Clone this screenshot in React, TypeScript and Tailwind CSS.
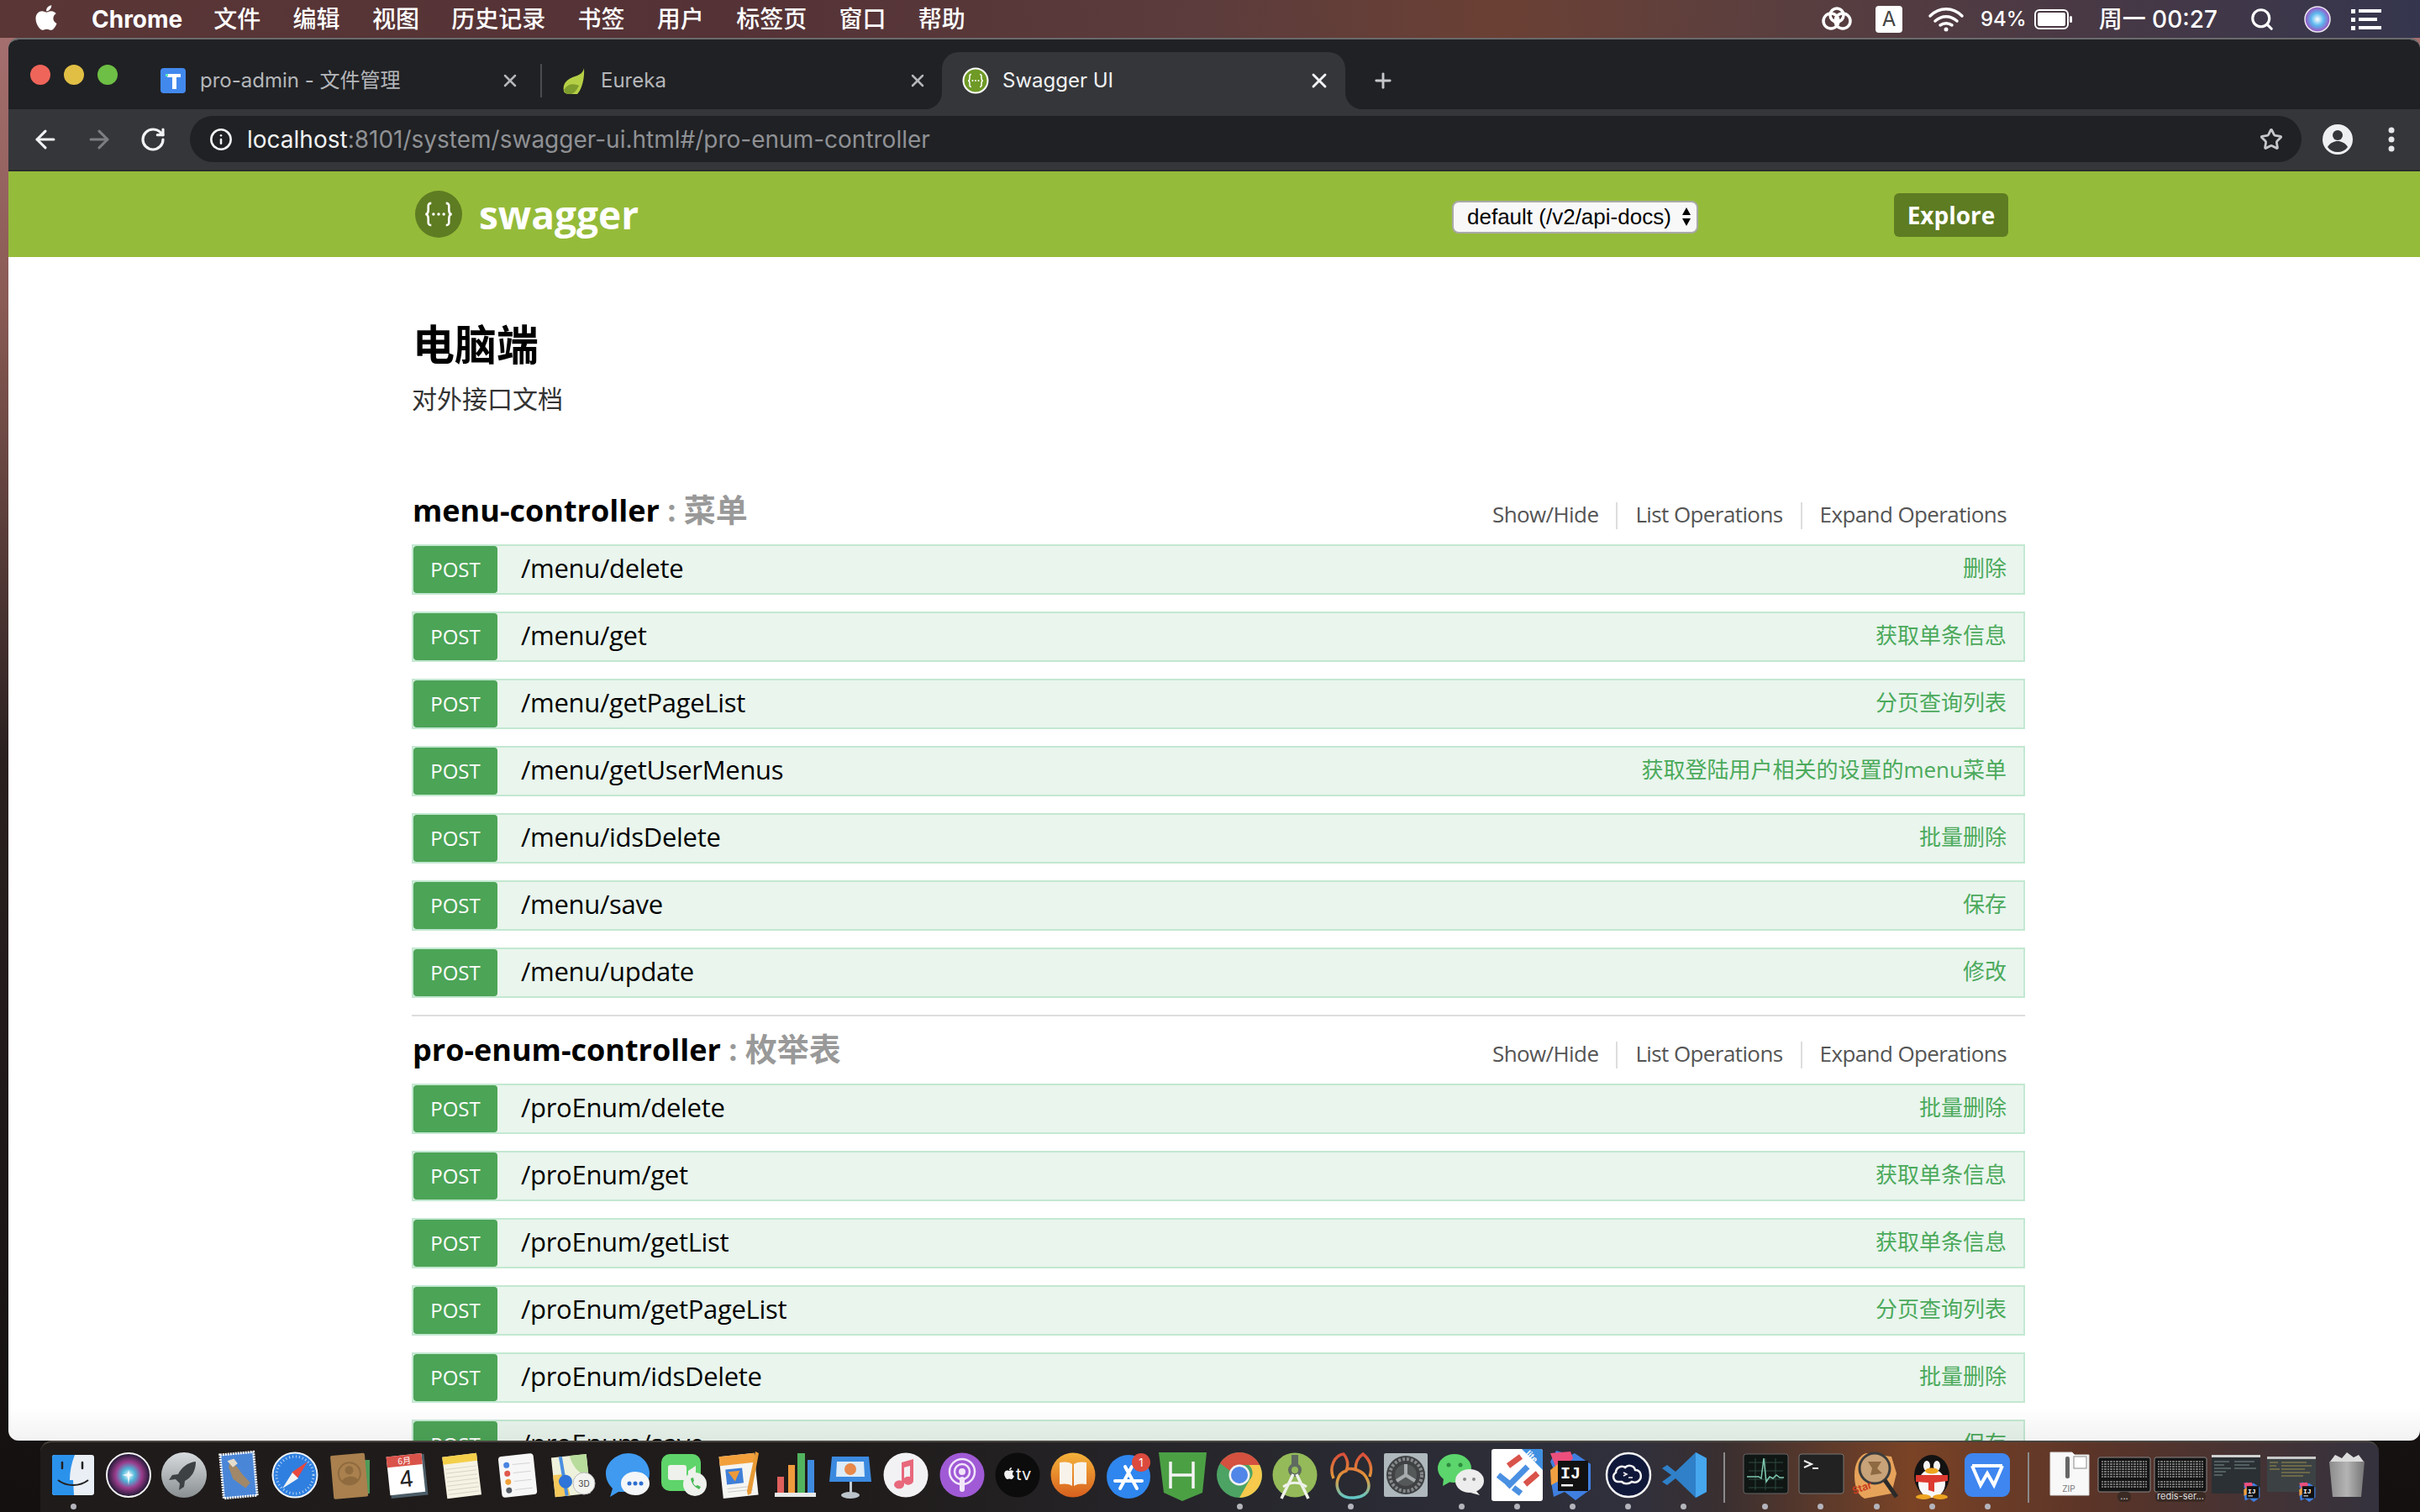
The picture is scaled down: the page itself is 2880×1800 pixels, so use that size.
import type { ReactNode } from "react";
import { ArrowLeft, ArrowRight, Info, Plus, RotateCw, Search, Star, X } from "lucide-react";
import { FaApple } from "react-icons/fa";

const menuItems = ["文件", "编辑", "视图", "历史记录", "书签", "用户", "标签页", "窗口", "帮助"];

const sections = [
  {
    name: "menu-controller",
    desc: "菜单",
    rows: [
      ["/menu/delete", "删除"],
      ["/menu/get", "获取单条信息"],
      ["/menu/getPageList", "分页查询列表"],
      ["/menu/getUserMenus", "获取登陆用户相关的设置的menu菜单"],
      ["/menu/idsDelete", "批量删除"],
      ["/menu/save", "保存"],
      ["/menu/update", "修改"],
    ],
  },
  {
    name: "pro-enum-controller",
    desc: "枚举表",
    rows: [
      ["/proEnum/delete", "批量删除"],
      ["/proEnum/get", "获取单条信息"],
      ["/proEnum/getList", "获取单条信息"],
      ["/proEnum/getPageList", "分页查询列表"],
      ["/proEnum/idsDelete", "批量删除"],
      ["/proEnum/save", "保存"],
    ],
  },
];

function SwaggerMark({ size, ring }: { size: number; ring?: boolean }) {
  return (
    <svg width={size} height={size} viewBox="0 0 32 32">
      <circle cx="16" cy="16" r={ring ? 14.5 : 16} fill={ring ? "#6f9a26" : "#5e7c22"} stroke={ring ? "#fff" : "none"} strokeWidth="2" />
      <path d="M11 8.5c-2.5 0-2 2-2 4s-.5 3.5-2 3.5c1.5 0 2 1.500 2 3.5s-.5 4 2 4M21 8.5c2.5 0 2 2 2 4s.5 3.5 2 3.5c-1.500 0-2 1.500-2 3.5s.5 4-2 4" fill="none" stroke="#fff" strokeWidth="1.5" />
      <circle cx="12.5" cy="16" r="1" fill="#fff" />
      <circle cx="16" cy="16" r="1" fill="#fff" />
      <circle cx="19.5" cy="16" r="1" fill="#fff" />
    </svg>
  );
}

function StatusBar() {
  return (
    <div className="flex h-[45px] shrink-0 items-center bg-[linear-gradient(90deg,#5a3636_0%,#543236_30%,#5c3c3c_50%,#6b4034_62%,#5c3f3e_72%,#4a3944_85%,#35364e_100%)] text-[28px] leading-none text-white [font-family:Inter,'Noto_Sans_CJK_SC',sans-serif]">
      <FaApple className="ml-[40px] mb-[4px] h-[34px] w-[30px]" />
      <span className="ml-[39px] font-bold">Chrome</span>
      <div className="ml-[37px] flex gap-[38.3px] font-medium">
        {menuItems.map((m) => (
          <span key={m}>{m}</span>
        ))}
      </div>
      <div className="ml-auto flex items-center">
        <svg width="40" height="32" viewBox="0 0 40 32" fill="none" stroke="#fff" strokeWidth="3.5">
          <circle cx="13" cy="18" r="9" />
          <circle cx="27" cy="18" r="9" />
          <circle cx="20" cy="11" r="8" />
        </svg>
        <span className="ml-[26px] flex h-[32px] w-[32px] items-center justify-center rounded-[4px] bg-white text-[24px] text-[#444]">A</span>
        <svg className="ml-[30px]" width="44" height="32" viewBox="0 0 44 32" fill="none" stroke="#fff" strokeWidth="3.5" strokeLinecap="round">
          <path d="M3 12c11-11 27-11 38 0M9 18c8-7 18-7 26 0M15 23c4-3 10-3 14 0" />
          <circle cx="22" cy="28" r="2.5" fill="#fff" stroke="none" />
        </svg>
        <span className="ml-[19px] text-[24px] font-medium">94%</span>
        <svg className="ml-[9px]" width="46" height="24" viewBox="0 0 46 24">
          <rect x="1" y="1" width="39" height="22" rx="5" fill="none" stroke="#fff" strokeWidth="2" />
          <rect x="4" y="4" width="33" height="16" rx="2" fill="#fff" />
          <rect x="42" y="8" width="3" height="8" rx="1.5" fill="#fff" />
        </svg>
        <span className="ml-[31px] font-medium">周一 00:27</span>
        <Search className="ml-[38px] h-[30px] w-[30px]" strokeWidth={2.5} />
        <svg className="ml-[35px]" width="32" height="32" viewBox="0 0 32 32">
          <defs>
            <radialGradient id="menuSiri">
              <stop offset="0" stopColor="#fff" />
              <stop offset="0.5" stopColor="#5bb7ee" />
              <stop offset="1" stopColor="#a04ec0" />
            </radialGradient>
          </defs>
          <circle cx="16" cy="16" r="15" fill="url(#menuSiri)" stroke="#e8e8f0" strokeWidth="1.5" />
        </svg>
        <svg className="ml-[24px] mr-[46px]" width="36" height="26" viewBox="0 0 36 26" fill="#fff">
          <rect x="0" y="1" width="5" height="5" />
          <rect x="9" y="1" width="27" height="4" />
          <rect x="0" y="11" width="5" height="5" />
          <rect x="9" y="11" width="22" height="4" />
          <rect x="0" y="21" width="5" height="5" />
          <rect x="9" y="21" width="27" height="4" />
        </svg>
      </div>
    </div>
  );
}

function TabStrip() {
  return (
    <div className="flex h-[83px] shrink-0 items-end bg-[#202124] text-[24px] leading-none [font-family:Inter,'Noto_Sans_CJK_SC',sans-serif]">
      <div className="mb-[29px] ml-[26px] flex gap-[16px]">
        <span className="h-[24px] w-[24px] rounded-full bg-[#f0655a]" />
        <span className="h-[24px] w-[24px] rounded-full bg-[#e1bf45]" />
        <span className="h-[24px] w-[24px] rounded-full bg-[#6dbf45]" />
      </div>
      <div className="mb-[19px] ml-[51px] flex h-[30px] w-[454px] items-center text-[#b4b6ba]">
        <svg width="30" height="30" viewBox="0 0 30 30">
          <rect width="30" height="30" rx="4" fill="#4289ee" />
          <rect x="8" y="7" width="16" height="4" fill="#fff" />
          <rect x="14" y="7" width="5" height="18" fill="#fff" />
          <rect x="6" y="7" width="3" height="3" fill="#5eeac0" />
        </svg>
        <span className="ml-[17px]">pro-admin - 文件管理</span>
        <X className="ml-[auto] mr-[24px] h-[24px] w-[24px]" strokeWidth={2.5} />
        <span className="h-[40px] w-[2px] bg-[#4a4c50]" />
      </div>
      <div className="mb-[19px] flex h-[30px] w-[476px] items-center pl-[22px] text-[#b4b6ba]">
        <svg width="32" height="32" viewBox="0 0 32 32">
          <path d="M28 1c-1 5-4 8-11 10C8 14 2 19 4 29c1 2 3 3 7 3h9c5-5 9-18 8-31z" fill="#b6d046" />
          <path d="M4 27c5-8 12-8 18-5-3 6-6 9-9 10h-3c-3 0-5-2-6-5z" fill="#7e9d2c" />
        </svg>
        <span className="ml-[16px]">Eureka</span>
        <X className="ml-[auto] mr-[17px] h-[24px] w-[24px]" strokeWidth={2.5} />
      </div>
      <div className="relative flex h-[68px] w-[480px] items-center rounded-t-[20px] bg-[#35363a] pl-[24px] text-[#f1f3f4]">
        <div className="absolute bottom-0 left-[-20px] h-[20px] w-[20px] bg-[#35363a]">
          <div className="h-full w-full rounded-br-[20px] bg-[#202124]" />
        </div>
        <div className="absolute bottom-0 right-[-20px] h-[20px] w-[20px] bg-[#35363a]">
          <div className="h-full w-full rounded-bl-[20px] bg-[#202124]" />
        </div>
        <SwaggerMark size={32} ring />
        <span className="ml-[16px]">Swagger UI</span>
        <X className="ml-auto mr-[17px] h-[28px] w-[28px]" strokeWidth={2.5} />
      </div>
      <Plus className="mb-[20px] ml-[31px] h-[28px] w-[28px] text-[#c4c7cb]" strokeWidth={2.5} />
    </div>
  );
}

function Toolbar() {
  return (
    <div className="flex h-[74px] shrink-0 items-start border-b-2 border-[#2b2c2f] bg-[#35363a] pt-[8px] text-[28px] leading-none [font-family:Inter,sans-serif]">
      <div className="ml-[12px] flex h-[55px] items-center">
        <div className="flex w-[64px] justify-center text-[#f1f3f4]">
          <ArrowLeft className="h-[34px] w-[34px]" strokeWidth={2.2} />
        </div>
        <div className="flex w-[64px] justify-center text-[#7c7e81]">
          <ArrowRight className="h-[34px] w-[34px]" strokeWidth={2.2} />
        </div>
        <div className="flex w-[64px] justify-center text-[#f1f3f4]">
          <RotateCw className="h-[32px] w-[32px]" strokeWidth={2.4} />
        </div>
      </div>
      <div className="ml-[12px] flex h-[55px] flex-1 items-center rounded-full bg-[#202124] pl-[23px] pr-[22px]">
        <Info className="h-[28px] w-[28px] text-[#f1f3f4]" strokeWidth={2.2} />
        <span className="ml-[17px] text-[#f1f3f4]">
          localhost<span className="text-[#8f9195]">:8101/system/swagger-ui.html#/pro-enum-controller</span>
        </span>
        <Star className="ml-auto h-[28px] w-[28px] text-[#c4c7cb]" strokeWidth={2.4} />
      </div>
      <div className="flex h-[55px] items-center pr-[30px]">
        <svg className="ml-[25px]" width="36" height="36" viewBox="0 0 36 36">
          <circle cx="18" cy="18" r="18" fill="#eef0f2" />
          <circle cx="18" cy="13" r="6" fill="#35363a" />
          <path d="M6 27c3-5 8-7 12-7s9 2 12 7c-3 4-7 6-12 6s-9-2-12-6z" fill="#35363a" />
        </svg>
        <svg className="ml-[42px]" width="8" height="30" viewBox="0 0 8 30" fill="#e4e6e8">
          <circle cx="4" cy="4" r="3.5" />
          <circle cx="4" cy="15" r="3.5" />
          <circle cx="4" cy="26" r="3.5" />
        </svg>
      </div>
    </div>
  );
}

function SwaggerHeader() {
  return (
    <div className="flex h-[102px] shrink-0 justify-center bg-[#95bb3a] pl-[10px] [font-family:'Open_Sans',sans-serif]">
      <div className="flex w-[1920px] items-center pl-[4px] pr-[20px]">
        <SwaggerMark size={56} />
        <span className="ml-[20px] text-[46px] font-bold leading-none text-white">swagger</span>
        <div className="ml-auto mr-[233px] mt-[6px] flex h-[39px] w-[293px] items-center rounded-[8px] border-2 border-[#a9a9a9] bg-[#f8f8f8] pl-[16px] text-[26px] leading-none text-black [font-family:'Liberation_Sans',sans-serif]">
          default (/v2/api-docs)
          <svg className="ml-auto mr-[6px]" width="12" height="24" viewBox="0 0 12 24">
            <path d="M6 1l5 9H1zM6 23l-5-9h10z" />
          </svg>
        </div>
        <button className="mt-[2px] h-[52px] w-[136px] rounded-[6px] bg-[#5e7c22] text-[28px] font-bold text-white">Explore</button>
      </div>
    </div>
  );
}

function Section({ section, first }: { section: (typeof sections)[number]; first: boolean }) {
  return (
    <section className={first ? "" : "border-t-2 border-[#dddddd]"}>
      <div className="flex h-[80px] items-start">
        <h2 className="mt-[18px] pl-[1px] text-[36px] font-bold leading-[40px] text-black">
          {section.name}
          <span className="text-[#999999]"> : <span className="text-[38px]">{section.desc}</span></span>
        </h2>
        <div className="ml-auto mr-[22px] mt-[30px] flex h-[32px] items-center text-[26px] leading-[28px] tracking-[-0.6px] text-[#555555]">
          <span className="h-full border-r-2 border-[#dddddd] pr-[21px]">Show/Hide</span>
          <span className="h-full border-r-2 border-[#dddddd] px-[21px]">List Operations</span>
          <span className="h-full pl-[21px]">Expand Operations</span>
        </div>
      </div>
      {section.rows.map(([path, desc]) => (
        <div key={path} className="mb-[20px] flex h-[60px] items-center border-2 border-[#c3e8d1] bg-[#e9f5ed] pr-[20px]">
          <span className="flex h-[56px] w-[100px] items-center justify-center rounded-[4px] bg-[#4ca457] text-[24px] leading-none text-white">POST</span>
          <span className="ml-[28px] mb-[4px] text-[31px] leading-none tracking-[-0.3px] text-black">{path}</span>
          <span className="ml-auto mb-[4px] text-[26px] leading-none text-[#4caa5c]">{desc}</span>
        </div>
      ))}
    </section>
  );
}

function Box({ children }: { children: ReactNode }) {
  return (
    <svg width="60" height="60" viewBox="0 0 60 60" className="overflow-visible">
      {children}
    </svg>
  );
}

function MiniIJ({ x = 0, y = 0, s = 1 }: { x?: number; y?: number; s?: number }) {
  return (
    <g transform={`translate(${x} ${y}) scale(${s})`}>
      <path d="M3 14L10 1l18 5 4-2 19 13v30L33 60 20 50 7 56l-3-18 5-10z" fill="#3f7fe0" />
      <path d="M3 4l24-2 3 8-17 20z" fill="#ec4f7c" />
      <path d="M3 24l10-8 2 20-11 6z" fill="#f0a040" />
      <rect x="12" y="13" width="36" height="36" fill="#111" />
      <text x="15" y="34" fontSize="20" fontWeight="700" fill="#fff" fontFamily="Liberation Mono, monospace">IJ</text>
      <rect x="16" y="41" width="14" height="2.5" fill="#fff" />
    </g>
  );
}

const Thumb = ({ label }: { label: string }) => (
  <Box>
    <rect x="-1" y="9" width="62" height="41" rx="2" fill="#141414" stroke="#8a8a8a" strokeWidth="1" />
    <path d="M3 14h54M3 17h54M3 20h54M3 23h54M3 26h54M3 29h54M3 32h54M3 38h54M3 41h54M3 44h54" stroke="#909090" strokeWidth="1.4" strokeDasharray="2 1 3 1" />
    <rect x={label === "..." ? 22 : 0} y="50" width={label === "..." ? 16 : 60} height="12" rx="5" fill="#3a2a24" />
    <text x="30" y="59" textAnchor="middle" fontSize="11" fill="#ddd" fontFamily="Inter, sans-serif">{label}</text>
  </Box>
);

type DockApp = { id: string; dot?: boolean; icon: ReactNode } | { id: string; separator: true };

const dockApps: DockApp[] = [
  {
    id: "finder",
    dot: true,
    icon: (
      <Box>
        <rect x="5" y="6" width="50" height="48" rx="3" fill="#e9eff5" />
        <path d="M8 6h24c-4 10-6 20-6 30h4l1 18H8a3 3 0 0 1-3-3V9a3 3 0 0 1 3-3z" fill="#2b92ec" />
        <path d="M17 15v7M41 15v7" stroke="#222" strokeWidth="2.5" strokeLinecap="round" />
        <path d="M12 36c10 8 26 8 36 0" fill="none" stroke="#222" strokeWidth="2" />
      </Box>
    ),
  },
  {
    id: "siri",
    icon: (
      <Box>
        <defs>
          <radialGradient id="siriG">
            <stop offset="0" stopColor="#e8fbff" />
            <stop offset="0.3" stopColor="#4fb4d8" />
            <stop offset="0.6" stopColor="#9a3c8c" />
            <stop offset="1" stopColor="#191730" />
          </radialGradient>
        </defs>
        <circle cx="30" cy="30" r="26" fill="url(#siriG)" stroke="#f3f3f3" strokeWidth="2" />
        <path d="M30 24l1.500 4.500L36 30l-4.500 1.500L30 42l-1.500-10.500L22 30l6.500-1.500z" fill="#fff" opacity="0.8" />
      </Box>
    ),
  },
  {
    id: "launchpad",
    icon: (
      <Box>
        <defs>
          <linearGradient id="rocketG" x2="0" y2="1">
            <stop offset="0" stopColor="#d7dbde" />
            <stop offset="1" stopColor="#8a8f92" />
          </linearGradient>
        </defs>
        <circle cx="30" cy="30" r="27" fill="url(#rocketG)" />
        <path d="M44 14c-10 1-17 7-21 15l-7 1-4 6 8-1 5 5-1 8 6-4 1-7c8-4 13-12 13-23z" fill="#3d4144" />
      </Box>
    ),
  },
  {
    id: "mail",
    icon: (
      <Box>
        <g transform="rotate(-5 30 30)">
          <rect x="9" y="4" width="40" height="52" fill="#4a86d8" stroke="#fff" strokeWidth="3" strokeDasharray="2 1" />
          <path d="M20 12l8 8 6 10 8 10-6 6-14-12-4-14z" fill="#a08868" />
          <path d="M17 12l8-2 4 6-6 4z" fill="#e6dccb" />
        </g>
      </Box>
    ),
  },
  {
    id: "safari",
    icon: (
      <Box>
        <circle cx="30" cy="30" r="26.5" fill="#2f7fe0" stroke="#f0f4f8" strokeWidth="2" />
        <circle cx="30" cy="30" r="22" fill="none" stroke="#bcd9f5" strokeWidth="3" strokeDasharray="1 3" />
        <path d="M45 14L26 27l7 7z" fill="#e8483e" />
        <path d="M15 46l19-12-7-7z" fill="#f3f3f3" />
      </Box>
    ),
  },
  {
    id: "contacts",
    icon: (
      <Box>
        <rect x="46" y="12" width="6" height="40" fill="#4f9a58" />
        <g transform="rotate(-5 30 30)">
          <rect x="7" y="5" width="41" height="52" rx="2" fill="#a9804e" />
          <circle cx="28" cy="28" r="13" fill="none" stroke="#8f6b3f" strokeWidth="2" />
          <circle cx="28" cy="24" r="5" fill="#8f6b3f" />
          <path d="M18 37c3-7 17-7 20 0-5 4-15 4-20 0z" fill="#8f6b3f" />
        </g>
      </Box>
    ),
  },
  {
    id: "calendar",
    icon: (
      <Box>
        <g transform="rotate(-6 30 30)">
          <rect x="9" y="7" width="44" height="49" fill="#4c5d68" />
          <rect x="8" y="6" width="42" height="46" fill="#fff" />
          <rect x="8" y="6" width="42" height="13" fill="#d9534a" />
          <text x="29" y="16.5" textAnchor="middle" fontSize="10" fill="#fff" fontFamily="'Noto Sans CJK SC', sans-serif">6月</text>
          <text x="29" y="44" textAnchor="middle" fontSize="27" fill="#222" fontFamily="Inter, sans-serif">4</text>
        </g>
      </Box>
    ),
  },
  {
    id: "notes",
    icon: (
      <Box>
        <g transform="rotate(-7 30 30)">
          <rect x="9" y="6" width="41" height="50" fill="#f6f2e4" />
          <rect x="9" y="6" width="41" height="9" fill="#f4cf4a" />
          <path d="M11 21h37M11 26h37M11 31h37M11 36h37M11 41h37M11 46h37M11 51h37" stroke="#d8d4c6" />
        </g>
      </Box>
    ),
  },
  {
    id: "reminders",
    icon: (
      <Box>
        <g transform="rotate(-6 30 30)">
          <rect x="9" y="6" width="42" height="49" rx="4" fill="#f7f7f7" />
          <circle cx="18" cy="17" r="3.5" fill="#4a84e0" />
          <circle cx="18" cy="27" r="3.5" fill="#e0594e" />
          <circle cx="18" cy="37" r="3.5" fill="#f0a03a" />
          <circle cx="18" cy="47" r="3.5" fill="#555c66" />
          <path d="M25 17h21M25 27h21M25 37h21M25 47h21" stroke="#d4d4d4" />
        </g>
      </Box>
    ),
  },
  {
    id: "maps",
    icon: (
      <Box>
        <g transform="rotate(-6 28 28)">
          <rect x="6" y="7" width="42" height="47" fill="#eef2dc" />
          <path d="M28 7h20v26c-10-2-18-12-20-26z" fill="#b8dc9c" />
          <path d="M6 28h14l4 26H6z" fill="#f5c95c" />
          <path d="M17 7l3 47" stroke="#4a8fe0" strokeWidth="4" />
          <circle cx="20" cy="37" r="8" fill="#2f74d8" />
        </g>
        <circle cx="43" cy="40" r="13" fill="#f3f3f0" stroke="#bbb" />
        <text x="43" y="44" textAnchor="middle" fontSize="10" fill="#444" fontFamily="Inter, sans-serif">3D</text>
      </Box>
    ),
  },
  {
    id: "messages",
    icon: (
      <Box>
        <path d="M30 4c14 0 25 11 25 24 0 10-6 18-14 22H18L8 56l3-10C6 41 3 35 3 28 3 15 16 4 30 4z" fill="#3f9af0" />
        <ellipse cx="38" cy="40" rx="17" ry="14" fill="#f4f6f8" />
        <circle cx="31" cy="40" r="2.5" fill="#2f6ed0" />
        <circle cx="38" cy="40" r="2.5" fill="#2f6ed0" />
        <circle cx="45" cy="40" r="2.5" fill="#2f6ed0" />
      </Box>
    ),
  },
  {
    id: "facetime",
    icon: (
      <Box>
        <rect x="3" y="5" width="47" height="44" rx="10" fill="#5fd46a" />
        <rect x="11" y="18" width="22" height="18" rx="3" fill="#eef1ec" />
        <path d="M35 25l9-6v16l-9-6z" fill="#eef1ec" />
        <circle cx="43" cy="41" r="14" fill="#eef1ec" />
        <path d="M38 34c1 6 4 10 10 13l2-3-4-2-2 1c-2-1-3-3-3-5l1-1-1-4z" fill="#49b956" />
      </Box>
    ),
  },
  {
    id: "pages",
    icon: (
      <Box>
        <g transform="rotate(-6 28 30)">
          <rect x="8" y="6" width="42" height="50" fill="#f5f5f2" />
          <rect x="8" y="6" width="42" height="11" fill="#f2a03c" />
          <rect x="14" y="22" width="20" height="18" fill="#3f7fd8" />
          <path d="M17 25h14l-7 12z" fill="#ee9a3a" />
          <path d="M14 45h30M14 49h30" stroke="#ccc" />
        </g>
        <path d="M49 2l4 2-9 48-4 2-1-5z" fill="#e89a35" />
      </Box>
    ),
  },
  {
    id: "numbers",
    icon: (
      <Box>
        <rect x="9" y="32" width="8" height="19" fill="#e0605c" />
        <rect x="22" y="18" width="8" height="33" fill="#ef9a3c" />
        <rect x="33" y="4" width="9" height="47" fill="#52b35e" />
        <rect x="45" y="12" width="8" height="39" fill="#3f8be0" />
        <rect x="6" y="51" width="49" height="5" fill="#e8e8e8" />
      </Box>
    ),
  },
  {
    id: "keynote",
    icon: (
      <Box>
        <rect x="29" y="34" width="3" height="19" fill="#c5cdd4" />
        <ellipse cx="30" cy="54" rx="11" ry="4" fill="#bcc5cb" />
        <path d="M8 8h44l3 30H5z" fill="#3b8ae0" />
        <path d="M14 14h32l1 18H13z" fill="#dcecf8" />
        <circle cx="30" cy="23" r="7" fill="#e8884a" />
      </Box>
    ),
  },
  {
    id: "music",
    icon: (
      <Box>
        <circle cx="30" cy="30" r="26.5" fill="#f2f2f4" />
        <path d="M25 15l14-4v26a6 5 0 1 1-4-5V19l-7 2v21a6 5 0 1 1-3-5z" fill="#e8687c" />
      </Box>
    ),
  },
  {
    id: "podcasts",
    icon: (
      <Box>
        <circle cx="30" cy="30" r="26.5" fill="#a05ad6" />
        <circle cx="30" cy="26" r="15" fill="none" stroke="#f2e6fa" strokeWidth="2.5" />
        <circle cx="30" cy="26" r="9" fill="none" stroke="#f2e6fa" strokeWidth="2.5" />
        <circle cx="30" cy="26" r="4" fill="#f2e6fa" />
        <rect x="27" y="32" width="6" height="18" rx="3" fill="#f2e6fa" />
      </Box>
    ),
  },
  {
    id: "tv",
    icon: (
      <Box>
        <circle cx="30" cy="30" r="26.5" fill="#0c0c0c" />
        <FaApple x="12" y="20" size={16} color="#f2f2f2" />
        <text x="28" y="36" fontSize="20" fill="#f2f2f2" fontFamily="Inter, sans-serif">tv</text>
      </Box>
    ),
  },
  {
    id: "books",
    icon: (
      <Box>
        <defs>
          <linearGradient id="booksG" x2="0" y2="1">
            <stop offset="0" stopColor="#f5b33a" />
            <stop offset="1" stopColor="#d8601e" />
          </linearGradient>
        </defs>
        <circle cx="30" cy="30" r="26.5" fill="url(#booksG)" />
        <path d="M29 17c-4-3-10-3-15-2v26c5-1 11-1 15 2zM31 17c4-3 10-3 15-2v26c-5-1-11-1-15 2z" fill="#f8f3ea" />
      </Box>
    ),
  },
  {
    id: "appstore",
    icon: (
      <Box>
        <circle cx="30" cy="32" r="26" fill="#2f86ee" />
        <path d="M20 46l14-26M40 46L26 20M14 37h32" stroke="#fff" strokeWidth="4" strokeLinecap="round" />
        <circle cx="45" cy="15" r="11" fill="#dc4a3e" />
        <text x="45" y="20" textAnchor="middle" fontSize="13" fill="#fff" fontFamily="Inter, sans-serif">1</text>
      </Box>
    ),
  },
  {
    id: "hbuilder",
    icon: (
      <Box>
        <path d="M0 3h57l-5 48-24 10-22-10z" fill="#4ba044" />
        <path d="M14 14v32M41 14v32M14 30h27" stroke="#f4f4f4" strokeWidth="3.5" />
      </Box>
    ),
  },
  {
    id: "chrome",
    dot: true,
    icon: (
      <Box>
        <circle cx="30" cy="30" r="27" fill="#4ca364" />
        <path d="M30 3a27 27 0 0 1 24 15H30a12 12 0 0 0-11 7L7 16A27 27 0 0 1 30 3z" fill="#d4503f" />
        <path d="M54 18a27 27 0 0 1-24 39l12-21a12 12 0 0 0-1-18z" fill="#f7c94c" />
        <circle cx="30" cy="30" r="12.5" fill="#f2f2f2" />
        <circle cx="30" cy="30" r="10" fill="#4f86e8" />
      </Box>
    ),
  },
  {
    id: "android-studio",
    icon: (
      <Box>
        <circle cx="30" cy="30" r="26.5" fill="#94ba59" />
        <rect x="26" y="6" width="8" height="12" fill="#5f6a60" />
        <circle cx="30" cy="24" r="6" fill="none" stroke="#5f6a60" strokeWidth="4" />
        <path d="M28 29L14 58M32 29l14 29" stroke="#eef2ea" strokeWidth="3.5" />
        <path d="M16 44c9-6 19-6 28 0" fill="none" stroke="#eef2ea" strokeWidth="3" />
      </Box>
    ),
  },
  {
    id: "navicat",
    dot: true,
    icon: (
      <Box>
        <defs>
          <linearGradient id="navG" x2="0" y2="1">
            <stop offset="0" stopColor="#d94f3a" />
            <stop offset="0.55" stopColor="#e29a3a" />
            <stop offset="1" stopColor="#5fc8c8" />
          </linearGradient>
        </defs>
        <path d="M10 34C4 20 12 6 22 5c5 6 6 13 3 20M25 25c-11 3-14 18-7 27 8 8 26 6 32-2 5-8 0-22-12-26-7-2-12-2-13 1zM36 24c0-8 3-15 9-19 8 6 12 16 8 27" fill="none" stroke="url(#navG)" strokeWidth="3.5" />
      </Box>
    ),
  },
  {
    id: "prefs",
    icon: (
      <Box>
        <rect x="4" y="4" width="52" height="52" rx="2" fill="#aeb8bd" />
        <circle cx="30" cy="30" r="23" fill="#3f4143" />
        <circle cx="30" cy="30" r="19" fill="none" stroke="#86898b" strokeWidth="4" strokeDasharray="3 2" />
        <circle cx="30" cy="30" r="13" fill="#555859" />
        <path d="M30 30V17M30 30l11 7M30 30l-11 7" stroke="#a8abad" strokeWidth="4" />
      </Box>
    ),
  },
  {
    id: "wechat",
    dot: true,
    icon: (
      <Box>
        <ellipse cx="22" cy="22" rx="20" ry="17" fill="#5bd56c" />
        <path d="M9 34l-1 9 9-5z" fill="#5bd56c" />
        <circle cx="15" cy="18" r="2.5" fill="#2e8a3e" />
        <circle cx="29" cy="18" r="2.5" fill="#2e8a3e" />
        <ellipse cx="40" cy="37" rx="17" ry="14" fill="#ededed" />
        <path d="M47 48l5 6-11-3z" fill="#ededed" />
        <circle cx="34" cy="35" r="2" fill="#888" />
        <circle cx="45" cy="35" r="2" fill="#888" />
      </Box>
    ),
  },
  {
    id: "teambition-lite",
    dot: true,
    icon: (
      <Box>
        <rect y="-1" width="61" height="62" rx="3" fill="#fff" />
        <path d="M36 -1h22a3 3 0 0 1 3 3v22z" fill="#3f8fe0" />
        <text x="47" y="11" fontSize="10" fontWeight="700" fill="#fff" transform="rotate(45 47 9)" textAnchor="middle" fontFamily="Inter, sans-serif">lite</text>
        <path d="M20 19l15-11M40 41l15-13" stroke="#d9534a" strokeWidth="7" />
        <path d="M8 30l14 11 21-21M26 45l9 7M22 41l-3 3" fill="none" stroke="#4a90e2" strokeWidth="7" />
      </Box>
    ),
  },
  {
    id: "idea",
    dot: true,
    icon: (
      <Box>
        <MiniIJ s={1} />
      </Box>
    ),
  },
  {
    id: "cloud",
    dot: true,
    icon: (
      <Box>
        <circle cx="30" cy="30" r="26" fill="#10183a" stroke="#f4f4f4" strokeWidth="2.5" />
        <path d="M18 38c-6 0-8-8-3-11 0-6 7-9 11-6 4-4 11-2 12 3 7 0 9 9 4 13-2 2-5 2-8 1-4 3-9 3-12 0z" fill="none" stroke="#f4f4f4" strokeWidth="2.5" />
        <path d="M24 27l4 2-4 2M30 33h5" stroke="#f4f4f4" strokeWidth="1.5" fill="none" />
      </Box>
    ),
  },
  {
    id: "vscode",
    dot: true,
    icon: (
      <Box>
        <path d="M44 3l13 7v40l-13 7L20 34l-10 8-6-4 11-8L4 22l6-4 10 8z" fill="#2f80c8" />
        <path d="M44 3l13 7v40l-13 7z" fill="#46a6ee" />
      </Box>
    ),
  },
  { id: "sep-1", separator: true },
  {
    id: "activity",
    dot: true,
    icon: (
      <Box>
        <rect x="4" y="5" width="53" height="47" rx="3" fill="#0f1614" stroke="#666" />
        <path d="M10 15h41M10 25h41M10 35h41M10 45h41M18 10v38M30 10v38M42 10v38" stroke="#2e4a40" />
        <path d="M8 32h14l3 2 3-24 3 28 4-6 4 2 4-4 4 3h5" fill="none" stroke="#7fc9ae" strokeWidth="1.5" />
      </Box>
    ),
  },
  {
    id: "terminal",
    dot: true,
    icon: (
      <Box>
        <rect x="4" y="5" width="53" height="47" rx="3" fill="#222" stroke="#777" />
        <path d="M10 13l9 4-9 4" fill="none" stroke="#f2f2f2" strokeWidth="2" />
        <rect x="20" y="21" width="7" height="2" fill="#f2f2f2" />
      </Box>
    ),
  },
  {
    id: "starred",
    dot: true,
    icon: (
      <Box>
        <path d="M4 30c0-14 6-24 14-26l30 4 6 20-6 24-32 6C8 54 4 44 4 30z" fill="#e8a35a" />
        <circle cx="28" cy="22" r="18" fill="#c8a278" stroke="#3d3d3d" strokeWidth="3" />
        <path d="M40 36l14 20" stroke="#2a2a2a" strokeWidth="5" />
        <path d="M20 14h16l-5 8 6 6-14 2 2-8z" fill="#8e6a42" />
        <text x="2" y="52" fontSize="12" fontWeight="700" fill="#c8401f" fontFamily="Inter, sans-serif" transform="rotate(-20 6 50)">Star</text>
      </Box>
    ),
  },
  {
    id: "qq",
    dot: true,
    icon: (
      <Box>
        <ellipse cx="30" cy="31" rx="21" ry="25" fill="#121212" />
        <ellipse cx="30" cy="40" rx="16" ry="17" fill="#f8f8f8" />
        <ellipse cx="24" cy="19" rx="4" ry="6" fill="#f4f4f4" />
        <ellipse cx="36" cy="19" rx="4" ry="6" fill="#f4f4f4" />
        <ellipse cx="30" cy="25" rx="8" ry="3.5" fill="#eda41f" />
        <path d="M11 30h38v7l-16 2v11l-7-2v-9l-15-1z" fill="#dd3a30" />
        <ellipse cx="20" cy="56" rx="9" ry="3" fill="#eda41f" />
        <ellipse cx="40" cy="56" rx="9" ry="3" fill="#eda41f" />
      </Box>
    ),
  },
  {
    id: "wps",
    dot: true,
    icon: (
      <Box>
        <rect x="3" y="4" width="54" height="52" rx="9" fill="#3f86f0" />
        <path d="M12 19l10 23 8-14 8 14 10-23M12 19h36" fill="none" stroke="#fff" strokeWidth="4" />
      </Box>
    ),
  },
  { id: "sep-2", separator: true },
  {
    id: "zip",
    icon: (
      <Box>
        <path d="M8 3h26l3 3h17v48H8z" fill="#f8f8f8" stroke="#ddd" />
        <rect x="26" y="8" width="5" height="26" rx="2" fill="#666" />
        <rect x="36" y="8" width="15" height="14" fill="#fff" stroke="#888" />
        <text x="30" y="50" textAnchor="middle" fontSize="10" fill="#777" fontFamily="Inter, sans-serif">ZIP</text>
      </Box>
    ),
  },
  { id: "shot-1", icon: <Thumb label="..." /> },
  { id: "shot-2", icon: <Thumb label="redis-ser..." /> },
  {
    id: "shot-3",
    icon: (
      <Box>
        <rect x="1" y="6" width="58" height="46" fill="#2b3034" />
        <rect x="1" y="6" width="58" height="3" fill="#d0d0d0" />
        <path d="M4 14h18M4 18h12M4 22h20M4 26h14M4 30h10M28 14h24M28 18h18M28 22h26" stroke="#7b8d90" />
        <MiniIJ x={38} y={38} s={0.4} />
      </Box>
    ),
  },
  {
    id: "shot-4",
    icon: (
      <Box>
        <rect x="1" y="8" width="58" height="42" fill="#3c4244" />
        <rect x="1" y="8" width="58" height="3" fill="#c8c8c8" />
        <path d="M4 15h10M4 19h8M4 23h12M18 15h30M18 19h36M18 23h28M18 27h34M18 31h26" stroke="#9b8f4e" />
        <MiniIJ x={38} y={38} s={0.4} />
      </Box>
    ),
  },
  {
    id: "trash",
    icon: (
      <Box>
        <defs>
          <linearGradient id="trashG" x2="1">
            <stop offset="0" stopColor="#8c8c8c" />
            <stop offset="0.5" stopColor="#b4b4b4" />
            <stop offset="1" stopColor="#757575" />
          </linearGradient>
        </defs>
        <path d="M9 14h42l-4 42H13z" fill="url(#trashG)" />
        <path d="M10 14l6-8 8 4 6-7 8 6 6-3 6 8z" fill="#dcdcdc" />
      </Box>
    ),
  },
];

function Dock() {
  return (
    <div className="ml-[48px] mr-[49px] flex h-[85px] shrink-0 items-start rounded-t-[14px] border-t-2 border-[#48443f] bg-[linear-gradient(90deg,#1f1b1a_0%,#201c1b_35%,#2a2b34_58%,#30303c_68%,#3a2f30_72%,#7a4326_80%,#5a3428_88%,#34323e_100%)] pl-[6px]">
      {dockApps.map((app) =>
        "separator" in app ? (
          <div key={app.id} className="flex h-full w-[31px] shrink-0 justify-center pt-[12px]">
            <span className="h-[60px] w-[2px] bg-[#8a8a8a]" />
          </div>
        ) : (
          <div key={app.id} className="flex w-[66.1px] shrink-0 flex-col items-center pt-[9px]">
            {app.icon}
            {app.dot && <span className="mt-[4px] h-[7px] w-[7px] rounded-full bg-[#b4b4bc]" />}
          </div>
        ),
      )}
    </div>
  );
}

export default function App() {
  return (
    <div className="flex h-[1800px] w-[2880px] flex-col overflow-hidden bg-[linear-gradient(180deg,#a87272_0%,#8a5a54_20%,#2a2020_50%,#141010_100%)]">
      <StatusBar />
      <div className="relative ml-[10px] flex h-[1670px] shrink-0 flex-col overflow-hidden rounded-t-[12px] rounded-b-[12px] border-t-2 border-[#6a6a6c] bg-white">
        <TabStrip />
        <Toolbar />
        <SwaggerHeader />
        <main className="flex flex-1 justify-center overflow-hidden pl-[10px] [font-family:'Open_Sans','Noto_Sans_CJK_SC',sans-serif]">
          <div className="w-[1920px]">
            <div className="h-[262px] pt-[74px]">
              <h1 className="pl-[1px] text-[50px] font-bold leading-[60px] text-black">电脑端</h1>
              <p className="mt-[15px] text-[30px] leading-[40px] text-[#333333]">对外接口文档</p>
            </div>
            {sections.map((s, i) => (
              <Section key={s.name} section={s} first={i === 0} />
            ))}
          </div>
        </main>
        <div className="absolute inset-x-0 bottom-0 h-[40px] bg-gradient-to-b from-transparent to-black/5" />
      </div>
      <Dock />
    </div>
  );
}
